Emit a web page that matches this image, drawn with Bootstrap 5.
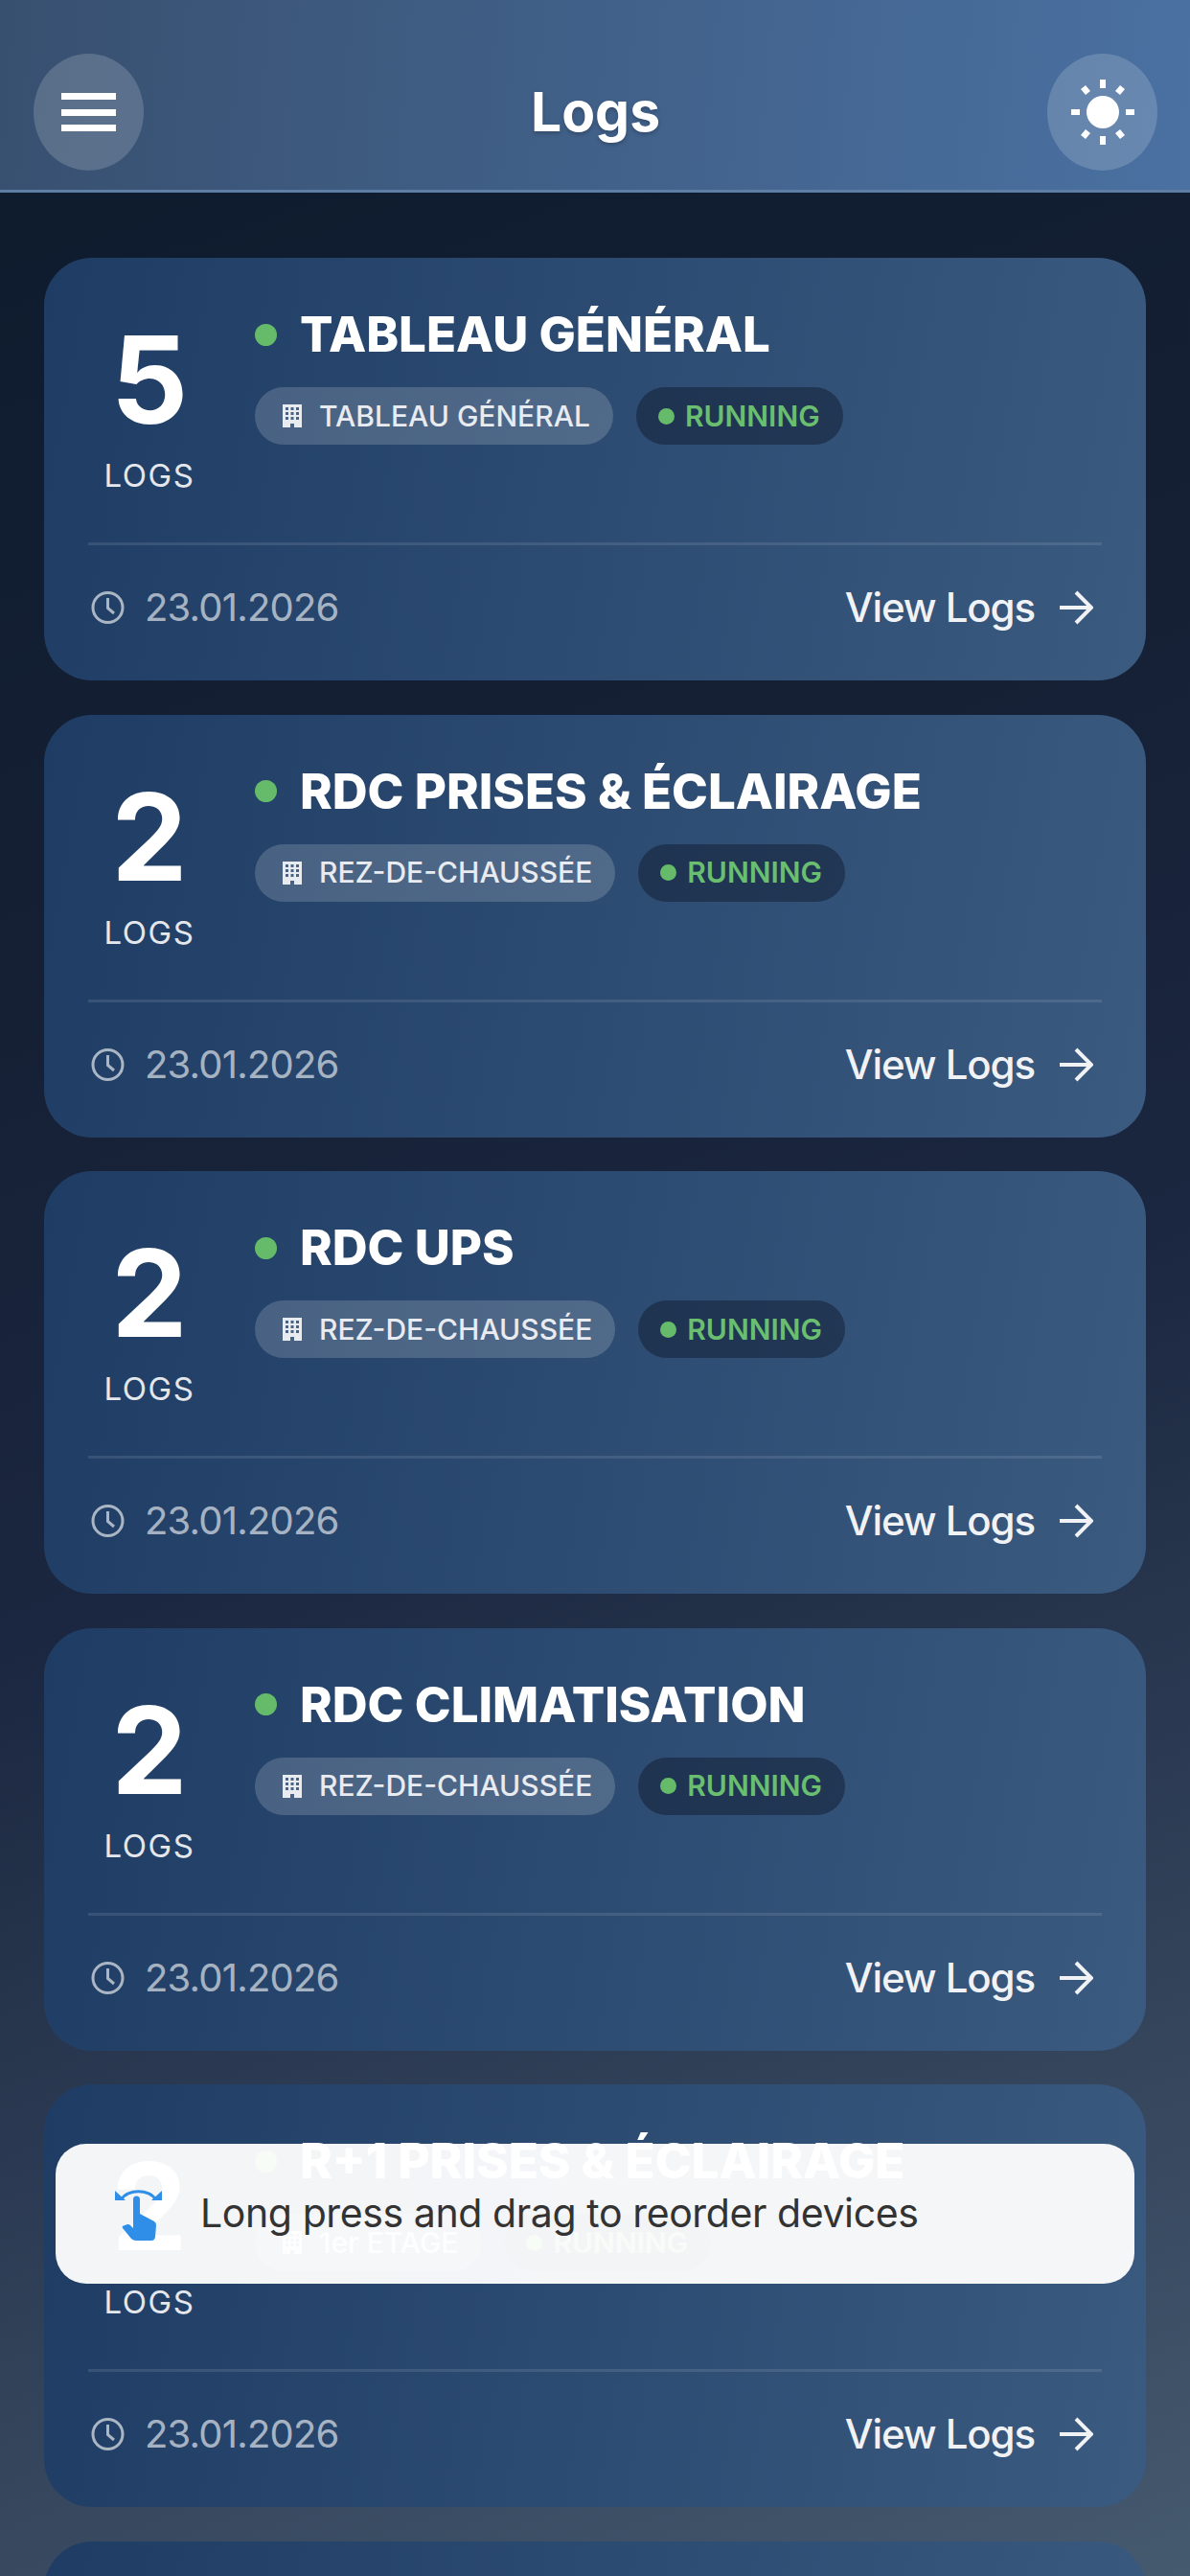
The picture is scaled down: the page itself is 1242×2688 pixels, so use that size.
<!DOCTYPE html>
<html lang="en">
<head>
  <meta charset="UTF-8" />
  <meta name="viewport" content="width=device-width, initial-scale=1" />
  <title>Logs</title>
  <link href="https://cdn.jsdelivr.net/npm/bootstrap@5.3.0/dist/css/bootstrap.min.css" rel="stylesheet" />
  <style>
    html, body {
      height: 2688px;
      overflow: hidden;
    }
    body {
      font-family: Inter, Roboto, "Liberation Sans", sans-serif;
      background: linear-gradient(160deg, #0d1b2d 0%, #141f33 30%, #1b2740 55%, #45596f 100%);
      color: #fff;
    }
    .top-bar {
      height: 201px;
      padding: 56px 34px 0 35px;
      background: linear-gradient(95deg, #385070 0%, #4a71a2 100%);
      border-bottom: 3px solid #5f7ea6;
    }
    .round-btn {
      width: 115px;
      height: 122px;
      background: rgba(255, 255, 255, .17);
    }
    .page-title {
      font-size: 57px;
      line-height: 122px;
      font-weight: 700;
      text-shadow: 0 2px 4px rgba(0, 0, 0, .25);
    }
    .burger {
      width: 57px;
      height: 40px;
    }
    .burger span {
      height: 7px;
      background: #fff;
    }
    .card-list {
      padding: 68px 46px 0;
      gap: 35.6px;
    }
    .log-card {
      flex: none;
      height: 441px;
      padding: 0 46px;
      border-radius: 50px;
      background: linear-gradient(100deg, #1f3d64 0%, #3b5a80 100%);
    }
    .card-top {
      height: 300px;
      padding-top: 50px;
      border-bottom: 3px solid rgba(255, 255, 255, .1);
      gap: 46px;
    }
    .count-col {
      width: 128px;
      flex: none;
      padding-top: 14px;
    }
    .count-num {
      font-size: 126px;
      line-height: 126px;
      font-weight: 700;
    }
    .count-label {
      font-size: 33px;
      line-height: 40px;
      letter-spacing: 1.5px;
      color: #e4e7ec;
      margin-top: 17px;
    }
    .state-dot {
      width: 23px;
      height: 23px;
      background: #66bb6a;
      flex: none;
    }
    .device-name {
      font-size: 51px;
      line-height: 60px;
      font-weight: 800;
      gap: 24px;
    }
    .chip-row {
      margin-top: 25px;
      gap: 24px;
    }
    .info-chip {
      height: 60px;
      padding: 0 24px 0 29px;
      font-size: 30px;
      font-weight: 500;
      border-radius: 30px;
      gap: 18px;
      color: #e8ebf0;
      background: rgba(255, 255, 255, .17);
    }
    .run-chip {
      height: 60px;
      padding: 0 24px 0 23px;
      font-size: 30px;
      font-weight: 600;
      border-radius: 30px;
      gap: 11px;
      color: #69bf6f;
      background: rgba(15, 28, 48, .5);
    }
    .run-chip i {
      width: 17px;
      height: 17px;
      background: #66bb6a;
    }
    .card-foot {
      padding: 41px 9px 0 3px;
    }
    .foot-date {
      font-size: 40px;
      line-height: 48px;
      letter-spacing: -.8px;
      gap: 21px;
      color: rgba(255, 255, 255, .62);
    }
    .foot-link {
      font-size: 42px;
      line-height: 48px;
      letter-spacing: -1.1px;
      font-weight: 500;
      gap: 26px;
      color: #f0f2f6;
    }
    .hint-box {
      position: absolute;
      left: 58px;
      top: 2237px;
      width: 1126px;
      height: 146px;
      padding-left: 60px;
      gap: 37px;
      border-radius: 32px;
      background: rgba(255, 255, 255, .95);
      color: #333;
      font-size: 41px;
      letter-spacing: -.4px;
    }
  </style>
</head>
<body class="d-flex flex-column">

<header class="top-bar d-flex justify-content-between flex-shrink-0">
  <div class="round-btn rounded-circle d-flex align-items-center justify-content-center">
    <div class="burger d-flex flex-column justify-content-between">
      <span></span><span></span><span></span>
    </div>
  </div>
  <div class="page-title">Logs</div>
  <div class="round-btn rounded-circle d-flex align-items-center justify-content-center">
    <svg width="66" height="70" viewBox="0 0 66 70" fill="#fff">
      <circle cx="33" cy="35" r="17"/>
      <rect x="30" y="1" width="6" height="9"/>
      <rect x="30" y="60" width="6" height="9"/>
      <rect x="0" y="32" width="9" height="6"/>
      <rect x="57" y="32" width="9" height="6"/>
      <path d="M10 11l5 -4l5 6l-5 4zM56 11l-5 -4l-5 6l5 4zM10 59l5 4l5 -6l-5 -4zM56 59l-5 4l-5 -6l5 -4z"/>
    </svg>
  </div>
</header>

<main class="card-list d-flex flex-column flex-shrink-0" id="cardList"></main>

<div class="hint-box d-flex align-items-center">
  <svg width="54" height="62" viewBox="28 20 54 62" fill="#2f8fe8">
    <path d="M37 36C42 25 67 25 72 36" fill="none" stroke="#2f8fe8" stroke-width="3"/>
    <path d="M30 27V37H41zM79 27V37H68z"/>
    <path d="M49 36a3.5 3.5 0 0 1 7 0V51L71 59Q73 60 73 63L72 75Q71.500 79 68 79H52Q49 79 47 77L38 66Q37 64 39 63.500L43 62Q45 62 46 63L49 66z"/>
  </svg>
  <span>Long press and drag to reorder devices</span>
</div>

<script>
  const devices = [
    { name: "TABLEAU GÉNÉRAL", place: "TABLEAU GÉNÉRAL", count: 5 },
    { name: "RDC PRISES & ÉCLAIRAGE", place: "REZ-DE-CHAUSSÉE", count: 2 },
    { name: "RDC UPS", place: "REZ-DE-CHAUSSÉE", count: 2 },
    { name: "RDC CLIMATISATION", place: "REZ-DE-CHAUSSÉE", count: 2 },
    { name: "R+1 PRISES & ÉCLAIRAGE", place: "1er ÉTAGE", count: 2 },
    { name: "R+1 UPS", place: "1er ÉTAGE", count: 2 }
  ];

  const buildingIcon = `
    <svg width="20" height="24" viewBox="0 0 20 24" fill="currentColor" fill-rule="evenodd">
      <path d="M0 0H20V24H12V20H8V24H0ZM3 3V6H6V3ZM8.500 3V6H11.500V3ZM14 3V6H17V3ZM3 8V11H6V8ZM8.500 8V11H11.500V8ZM14 8V11H17V8ZM3 13V16H6V13ZM8.500 13V16H11.500V13ZM14 13V16H17V13Z"/>
    </svg>`;

  const clockIcon = `
    <svg width="35" height="36" viewBox="0 0 35 36" fill="none" stroke="currentColor" stroke-width="3">
      <circle cx="17.500" cy="18" r="15.500"/>
      <path d="M17.500 8V18.500L24 24"/>
    </svg>`;

  const arrowIcon = `
    <svg width="35" height="36" viewBox="0 0 35 36" fill="none" stroke="currentColor" stroke-width="4">
      <path d="M0 18H32M17 2L33 18L17 34"/>
    </svg>`;

  const list = document.getElementById("cardList");

  devices.forEach((device) => {
    const div = document.createElement("div");
    div.className = "log-card";
    div.innerHTML = `
      <div class="card-top d-flex">
        <div class="count-col text-center">
          <div class="count-num">${device.count}</div>
          <div class="count-label">LOGS</div>
        </div>
        <div>
          <div class="device-name d-flex align-items-center">
            <span class="state-dot rounded-circle"></span>
            <span>${device.name}</span>
          </div>
          <div class="chip-row d-flex">
            <div class="info-chip d-flex align-items-center">${buildingIcon}<span>${device.place}</span></div>
            <div class="run-chip d-flex align-items-center"><i class="rounded-circle"></i><span>RUNNING</span></div>
          </div>
        </div>
      </div>
      <div class="card-foot d-flex justify-content-between align-items-center">
        <div class="foot-date d-flex align-items-center">${clockIcon}<span>23.01.2026</span></div>
        <div class="foot-link d-flex align-items-center"><span>View Logs</span>${arrowIcon}</div>
      </div>
    `;
    list.appendChild(div);
  });
</script>

<script src="https://cdn.jsdelivr.net/npm/bootstrap@5.3.0/dist/js/bootstrap.bundle.min.js"></script>
</body>
</html>
